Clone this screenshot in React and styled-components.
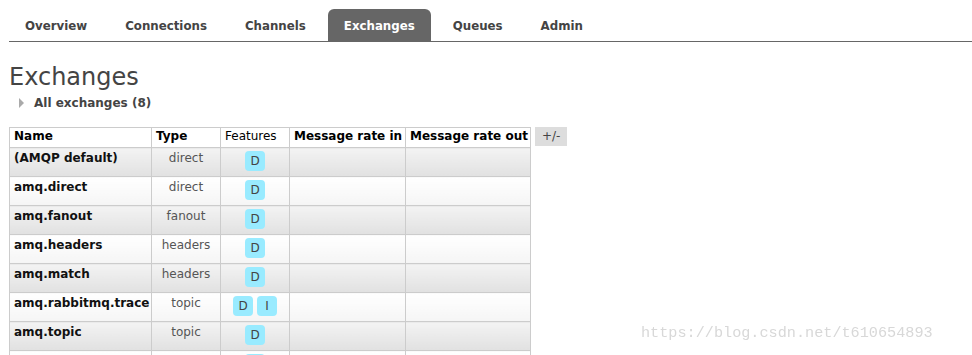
import React from 'react'
import styled, { createGlobalStyle } from 'styled-components';

const GlobalStyle = createGlobalStyle`
    body {
        margin : 0;
        background-color : #fff;
        font-family : "DejaVu Sans", Verdana, sans-serif;
        font-size : 12px;
        color : #444;
    }
`;

const Page = styled.div`
    padding : 9px 0 0 9px;
`;

const Menu = styled.ul`
    display : flex;
    gap : 6px;
    list-style : none;
    margin : 0;
    padding : 0;
    border-bottom : 1px solid #666;
`;

const Tab = styled.li`
    height : 32px;
    line-height : 34px;
    padding : 0 16px;
    font-weight : bold;
    font-size : 11.8px;
    color : ${p => (p.$active ? '#fff' : '#444')};
    background-color : ${p => (p.$active ? '#666' : 'transparent')};
    border-radius : 6px 6px 0 0;
`;

const Title = styled.h1`
    margin : 21px 0 0 0;
    font-size : 24px;
    line-height : 28px;
    font-weight : normal;
    color : #444;
`;

const Toggle = styled.div`
    display : flex;
    align-items : center;
    margin : 4px 0 0 10px;
    height : 16px;
    font-weight : bold;
    color : #444;
    & .arrow {
        width : 0;
        height : 0;
        border-top : 5px solid transparent;
        border-bottom : 5px solid transparent;
        border-left : 5px solid #aaa;
        margin-right : 10px;
    }
`;

const TableArea = styled.div`
    display : flex;
    align-items : flex-start;
    gap : 4px;
    margin-top : 16px;
`;

const List = styled.table`
    border-collapse : collapse;
    border : 1px solid #ccc;
    table-layout : fixed;
    width : 522px;
    & th {
        border : 1px solid #ccc;
        padding : 0 4px 3px;
        line-height : 16px;
        text-align : left;
        color : #000;
        background-color : #fff;
        white-space : nowrap;
        overflow : hidden;
        &.plain {
            font-weight : normal;
        }
    }
    & td {
        border : 1px solid #ccc;
        padding : 2px 4px 0;
        height : 26px;
        line-height : 16px;
        vertical-align : top;
        white-space : nowrap;
    }
`;

const Row = styled.tr`
    & td {
        background : ${p => (p.$alt
            ? 'linear-gradient(#f3f3f3, #e1e1e1)'
            : 'linear-gradient(#ffffff, #f5f5f5)')};
    }
    & .name {
        font-weight : bold;
        color : #111;
    }
    & .type {
        text-align : center;
        color : #555;
    }
    & .features {
        text-align : center;
    }
`;

const Badges = styled.div`
    display : flex;
    justify-content : center;
    gap : 4px;
    margin-top : 1px;
`;

const Badge = styled.span`
    display : inline-block;
    height : 20px;
    line-height : 20px;
    padding : 0 5px;
    min-width : 10px;
    border-radius : 4px;
    background-color : #99ebff;
    color : #444;
`;

const Columns = styled.button`
    border : none;
    padding : 0 7px;
    height : 19px;
    line-height : 19px;
    background-color : #ddd;
    color : #444;
    font-family : inherit;
    font-size : 12px;
`;

const Watermark = styled.div`
    position : fixed;
    left : 641px;
    top : 324px;
    font-family : "Liberation Mono", monospace;
    font-size : 15.2px;
    color : #d8d8d8;
    pointer-events : none;
`;

const tabs = ['Overview', 'Connections', 'Channels', 'Exchanges', 'Queues', 'Admin'];

const exchanges = [
    { name : '(AMQP default)', type : 'direct', features : ['D'] },
    { name : 'amq.direct', type : 'direct', features : ['D'] },
    { name : 'amq.fanout', type : 'fanout', features : ['D'] },
    { name : 'amq.headers', type : 'headers', features : ['D'] },
    { name : 'amq.match', type : 'headers', features : ['D'] },
    { name : 'amq.rabbitmq.trace', type : 'topic', features : ['D', 'I'] },
    { name : 'amq.topic', type : 'topic', features : ['D'] },
    { name : 'test.exchange', type : 'direct', features : ['D'] },
];

const App = () => {
    return (
        <Page>
            <GlobalStyle />
            <Menu>
                {tabs.map(t => (
                    <Tab key={t} $active={t === 'Exchanges'}>{t}</Tab>
                ))}
            </Menu>
            <Title>Exchanges</Title>
            <Toggle>
                <span className='arrow' />
                All exchanges (8)
            </Toggle>
            <TableArea>
                <List>
                    <colgroup>
                        <col style={{ width : 142 }} />
                        <col style={{ width : 69 }} />
                        <col style={{ width : 69 }} />
                        <col style={{ width : 116 }} />
                        <col style={{ width : 125 }} />
                    </colgroup>
                    <thead>
                        <tr>
                            <th>Name</th>
                            <th>Type</th>
                            <th className='plain'>Features</th>
                            <th>Message rate in</th>
                            <th>Message rate out</th>
                        </tr>
                    </thead>
                    <tbody>
                        {exchanges.map((x, i) => (
                            <Row key={x.name} $alt={i % 2 === 0}>
                                <td className='name'>{x.name}</td>
                                <td className='type'>{x.type}</td>
                                <td className='features'>
                                    <Badges>
                                        {x.features.map(f => <Badge key={f}>{f}</Badge>)}
                                    </Badges>
                                </td>
                                <td />
                                <td />
                            </Row>
                        ))}
                    </tbody>
                </List>
                <Columns>+/-</Columns>
            </TableArea>
            <Watermark>https://blog.csdn.net/t610654893</Watermark>
        </Page>
    )
}

export default App
